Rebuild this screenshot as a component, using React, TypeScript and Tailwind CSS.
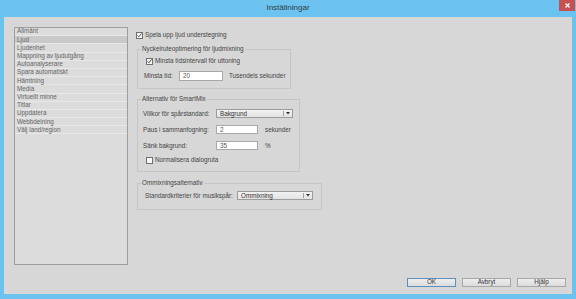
import type { ReactNode } from "react";

const items = [
  "Allmänt",
  "Ljud",
  "Ljudenhet",
  "Mappning av ljudutgång",
  "Autoanalyserare",
  "Spara automatiskt",
  "Hämtning",
  "Media",
  "Virtuellt minne",
  "Titlar",
  "Uppdatera",
  "Webbdelning",
  "Välj land/region",
];

const CheckBox = ({ checked, label }: { checked?: boolean; label: string }) => (
  <div className="flex items-center gap-[2px] h-[8px]">
    <span className="w-[7px] h-[7px] border border-[#6f6f6f] bg-[#f6f6f6] flex items-center justify-center shrink-0">
      {checked && (
        <svg width="7" height="7" viewBox="0 0 7 7">
          <path d="M0.8 3.4 L2.6 5.4 L6.4 0.6" fill="none" stroke="#2a2a2a" strokeWidth="1.1" />
        </svg>
      )}
    </span>
    <span>{label}</span>
  </div>
);

const TextInput = ({ value, w, h = 9 }: { value: string; w: string; h?: number }) => (
  <div
    className={`${w} ${h === 10 ? "h-[10px]" : "h-[9px]"} bg-white border border-[#a9a9a9] flex items-center pl-[3px] text-[#555] shrink-0`}
  >
    {value}
  </div>
);

const Select = ({ value, w }: { value: string; w: string }) => (
  <div
    className={`${w} h-[9px] bg-gradient-to-b from-[#f2f2f2] to-[#e3e3e3] border border-[#9c9c9c] flex items-center shrink-0`}
  >
    <span className="flex-1 pl-[3px] text-[#333]">{value}</span>
    <span className="w-[1px] h-[5px] bg-[#a0a0a0]" />
    <span className="w-[8px] flex items-center justify-center">
      <svg width="4" height="3" viewBox="0 0 4 3">
        <path d="M0 0 H4 L2 2.5 Z" fill="#333" />
      </svg>
    </span>
  </div>
);

const Group = ({
  title,
  w,
  className,
  children,
}: {
  title: string;
  w: string;
  className?: string;
  children: ReactNode;
}) => (
  <fieldset className={`${w} border border-[#c6c6c6] ${className ?? ""}`}>
    <legend className="ml-[3px] px-[1px] leading-[8px] text-[#444]">{title}</legend>
    {children}
  </fieldset>
);

const Button = ({ label, primary }: { label: string; primary?: boolean }) => (
  <button
    className={`w-[49px] h-[9px] flex items-center justify-center bg-gradient-to-b from-[#eeeeee] to-[#dcdcdc] border ${
      primary ? "border-[#5a8fc0]" : "border-[#a8a8a8]"
    } text-[#333] leading-none`}
  >
    {label}
  </button>
);

export default function App() {
  return (
    <div className="w-[576px] h-[299px] bg-[#6cc3ef] flex flex-col font-['Liberation_Sans',Arial,sans-serif] text-[6.3px] text-[#444] leading-[8px]">
      <div className="h-[17px] relative flex items-center justify-center">
        <span className="text-[8px] text-[#2d3b47] -mt-[1px]">Inställningar</span>
        <div className="absolute right-[1px] top-0 w-[16px] h-[11px] bg-[#c75050] flex items-center justify-center">
          <svg width="5" height="5" viewBox="0 0 5 5">
            <path d="M0.5 0.5 L4.5 4.5 M4.5 0.5 L0.5 4.5" stroke="#fff" strokeWidth="1.2" />
          </svg>
        </div>
      </div>

      <div className="mx-[4px] mb-[5px] flex-1 bg-[#d7d7d7] flex flex-col pt-[10px] pl-[10px] pr-[6px]">
        <div className="flex h-[238px]">
          <div className="w-[114px] h-[238px] border border-[#9d9d9d] bg-[#dcdcdc] flex flex-col shrink-0">
            {items.map((it) => (
              <div
                key={it}
                className={`h-[8.2px] border-b border-[#e8e8e8] pl-[2px] flex items-center text-[#666] leading-none ${
                  it === "Ljud" ? "bg-[#c9c9c9] text-[#555]" : ""
                }`}
              >
                {it}
              </div>
            ))}
          </div>

          <div className="ml-[9px] flex flex-col">
            <div className="mt-[4px] -ml-[1px]">
              <CheckBox checked label="Spela upp ljud understegning" />
            </div>

            <Group title="Nyckelruteoptimering för ljudmixning" w="w-[154px]" className="mt-[6px] pb-[7px]">
              <div className="mt-[4px] ml-[8px]">
                <CheckBox checked label="Minsta tidsintervall för uttoning" />
              </div>
              <div className="mt-[6px] ml-[6px] flex items-center">
                <span className="w-[35px] shrink-0">Minsta tid:</span>
                <TextInput value="20" w="w-[44px]" h={10} />
                <span className="ml-[6px]">Tusendels sekunder</span>
              </div>
            </Group>

            <Group title="Alternativ för SmartMix" w="w-[163px]" className="mt-[6px] pb-[7px]">
              <div className="mt-[6px] ml-[5px] flex items-center">
                <span className="w-[73px] shrink-0">Villkor för spårstandard:</span>
                <Select value="Bakgrund" w="w-[77px]" />
              </div>
              <div className="mt-[7px] ml-[5px] flex items-center">
                <span className="w-[73px] shrink-0">Paus i sammanfogning:</span>
                <TextInput value="2" w="w-[42px]" />
                <span className="ml-[7px]">sekunder</span>
              </div>
              <div className="mt-[7px] ml-[5px] flex items-center">
                <span className="w-[73px] shrink-0">Sänk bakgrund:</span>
                <TextInput value="35" w="w-[42px]" />
                <span className="ml-[7px]">%</span>
              </div>
              <div className="mt-[6px] ml-[8px]">
                <CheckBox label="Normalisera dialogruta" />
              </div>
            </Group>

            <Group title="Ommixningsalternativ" w="w-[185px]" className="mt-[7px] pb-[9px]">
              <div className="mt-[4px] ml-[7px] flex items-center">
                <span className="w-[92px] shrink-0">Standardkriterier för musikspår:</span>
                <Select value="Ommixning" w="w-[76px]" />
              </div>
            </Group>
          </div>
        </div>

        <div className="flex justify-end gap-[6px] mt-[13px]">
          <Button label="OK" primary />
          <Button label="Avbryt" />
          <Button label="Hjälp" />
        </div>
      </div>
    </div>
  );
}
